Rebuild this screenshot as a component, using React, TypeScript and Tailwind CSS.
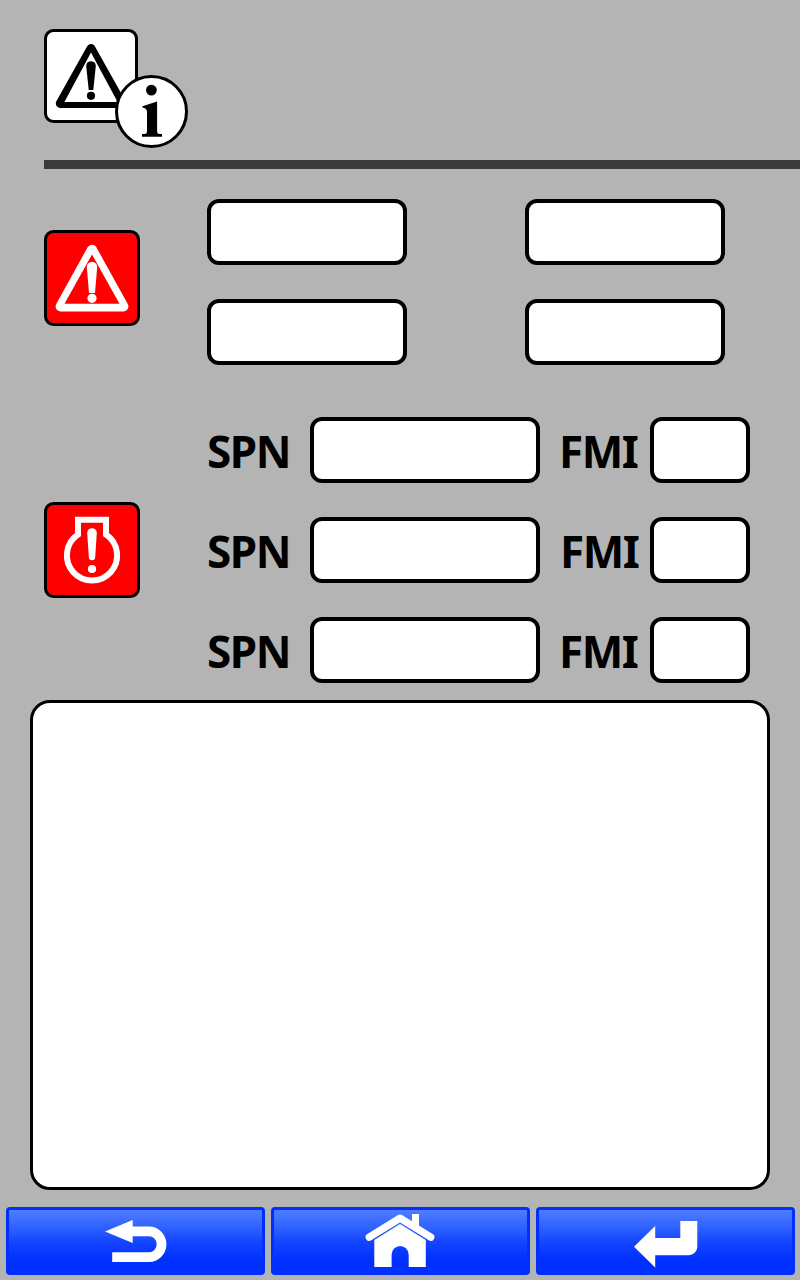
import type { ReactNode } from 'react';

function Field({ className }: { className: string }) {
  return <div className={`h-[66px] rounded-[12px] border-4 border-black bg-white ${className}`} />;
}

function InfoWarningIcon() {
  return (
    <svg className="block" width="146" height="121" viewBox="44 29 146 121">
      <rect x="45.5" y="30.5" width="91" height="91" rx="8" fill="#fff" stroke="#000" strokeWidth="3" />
      <path d="M91 48.4 L121.8 103.5 H60.2 Z" fill="#000" stroke="#000" strokeWidth="8.8" strokeLinejoin="round" />
      <path d="M91 52.4 L117.6 102 H64.4 Z" fill="#fff" />
      <path d="M86.2 66 A4.8 4.8 0 0 1 95.8 66 L93.3 90 H88.7 Z" fill="#000" />
      <circle cx="91" cy="95.8" r="4.1" fill="#000" />
      <circle cx="151.5" cy="111.5" r="35" fill="#fff" stroke="#000" strokeWidth="3" />
      <circle cx="151.4" cy="90.1" r="5.4" fill="#000" />
      <path d="M142.4 106.2 L157.1 101.6 V131.5 Q157.1 134 159.5 134 H162 V136.8 H142 V134 H144.6 Q147 134 147 131.5 V112 Q147 108.2 142.4 107.6 Z" fill="#000" />
    </svg>
  );
}

function WarningIcon() {
  return (
    <svg className="block" width="96" height="96" viewBox="44 230 96 96">
      <rect x="45.5" y="231.5" width="93" height="93" rx="8" fill="#f00" stroke="#000" strokeWidth="3" />
      <path d="M92 249.7 L123.4 306.4 H60.6 Z" fill="#fff" stroke="#fff" strokeWidth="10" strokeLinejoin="round" />
      <path d="M92 254.6 L119.5 303.7 H64.5 Z" fill="#f00" />
      <path d="M86.8 267 A5.2 5.2 0 0 1 97.2 267 L95 293 H89 Z" fill="#fff" />
      <circle cx="92" cy="298.3" r="4.6" fill="#fff" />
    </svg>
  );
}

function EngineIcon() {
  return (
    <svg className="block" width="96" height="96" viewBox="44 502 96 96">
      <rect x="45.5" y="503.5" width="93" height="93" rx="8" fill="#f00" stroke="#000" strokeWidth="3" />
      <path d="M78 534.6 V519.8 H106 V534.6 A25.1 25.1 0 1 1 78 534.6 Z" fill="none" stroke="#fff" strokeWidth="6" />
      <path d="M87.2 533 A4.8 4.8 0 0 1 96.8 533 L95.2 557 A3.2 3.2 0 0 1 88.8 557 Z" fill="#fff" />
      <circle cx="92" cy="569" r="4.1" fill="#fff" />
    </svg>
  );
}

function BackIcon() {
  return (
    <svg className="block h-full w-full" viewBox="9 1210 253 62">
      <path d="M105 1231.6 L132.7 1220 V1243 Z" fill="#fff" />
      <path d="M132 1231.4 H149 A12.6 12.9 0 0 1 149 1257.2 H112.2" fill="none" stroke="#fff" strokeWidth="9.7" />
    </svg>
  );
}

function HomeIcon() {
  return (
    <svg className="block h-full w-full" viewBox="274 1210 253 62">
      <path d="M412 1213.9 H419 V1232 L412 1227 Z" fill="#fff" />
      <path d="M369.3 1237.2 L400 1218.2 L430.7 1237.2" fill="none" stroke="#fff" strokeWidth="7.4" strokeLinecap="round" strokeLinejoin="round" />
      <path d="M374.3 1240 L400 1223.9 L425.8 1240 V1267 H408.7 V1254.7 A8.5 8.7 0 0 0 391.6 1254.7 V1267 H374.3 Z" fill="#fff" />
    </svg>
  );
}

function EnterIcon() {
  return (
    <svg className="block h-full w-full" viewBox="539 1210 253 62">
      <path d="M634 1246.7 L655.2 1226 V1238 H680.3 V1221 H697.3 V1247 A8.5 8.5 0 0 1 688.8 1255.2 H655.2 V1267.6 Z" fill="#fff" />
    </svg>
  );
}

function NavButton({ label, children }: { label: string; children: ReactNode }) {
  return (
    <button
      type="button"
      aria-label={label}
      className="h-[68px] w-[259px] rounded-[4px] border-[3px] border-[#0030ff] bg-linear-to-b from-[#4f7dff] via-[#1646ff] via-50% to-[#0030ff] to-80%"
    >
      {children}
    </button>
  );
}

function CodeRow({ fmiClass = 'pl-[19px]' }: { fmiClass?: string }) {
  return (
    <div className="flex h-[66px] items-center font-['Noto_Sans',sans-serif] text-[44px] leading-[66px] font-bold tracking-[-1.4px] text-black">
      <span className="w-[103px] pt-[2px]">SPN</span>
      <Field className="w-[230px]" />
      <span className={`w-[110px] pt-[2px] ${fmiClass}`}>FMI</span>
      <Field className="w-[100px]" />
    </div>
  );
}

export default function App() {
  return (
    <main className="flex h-[1280px] w-[800px] flex-col overflow-hidden bg-[#b4b4b4]">
      <header className="ml-11 h-[169px] border-b-[9px] border-[#3a3a3a] pt-[29px]">
        <InfoWarningIcon />
      </header>

      <section className="flex h-[196px] pt-[30px] pl-11">
        <div className="w-[163px] pt-[31px]">
          <WarningIcon />
        </div>
        <div className="grid h-[166px] grid-cols-[200px_200px] gap-x-[118px] gap-y-[34px]">
          <Field className="w-full" />
          <Field className="w-full" />
          <Field className="w-full" />
          <Field className="w-full" />
        </div>
      </section>

      <section className="mt-[52px] flex h-[266px] items-center pl-11">
        <div className="w-[163px]">
          <EngineIcon />
        </div>
        <div className="flex flex-col gap-[34px]">
          <CodeRow />
          <CodeRow fmiClass="pl-[20px]" />
          <CodeRow />
        </div>
      </section>

      <section className="mx-[30px] mt-[17px] h-[490px] rounded-[20px] border-[3px] border-black bg-white" />

      <nav className="mt-[17px] flex gap-[6px] pl-[6px]">
        <NavButton label="Back">
          <BackIcon />
        </NavButton>
        <NavButton label="Home">
          <HomeIcon />
        </NavButton>
        <NavButton label="Enter">
          <EnterIcon />
        </NavButton>
      </nav>
    </main>
  );
}
